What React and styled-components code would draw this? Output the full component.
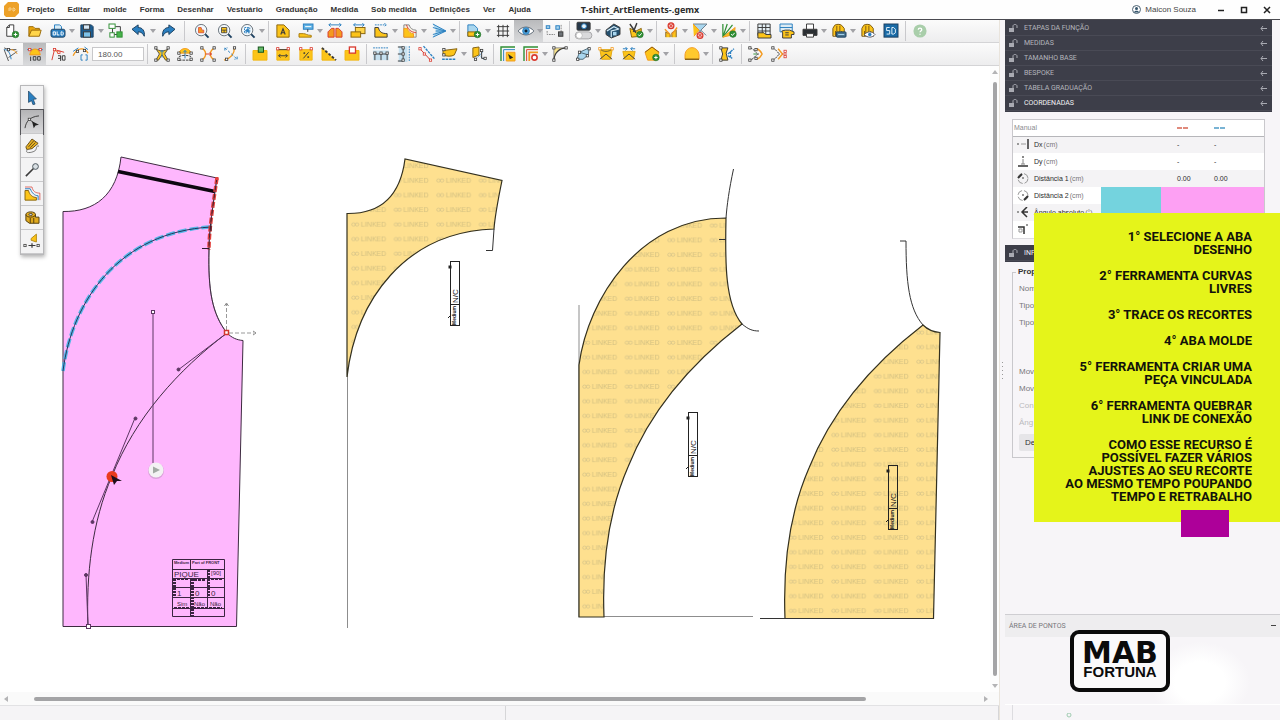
import React from "react";
import styled, { createGlobalStyle } from "styled-components";

const sans = '"Liberation Sans", Arial, sans-serif';
const caps = 'Roboto, "Liberation Sans", sans-serif';

const Global = createGlobalStyle`
  *, *::before, *::after { box-sizing: border-box; }
  body { margin: 0; background: #f7f5f8; font-family: ${sans}; color: #2c2c2c; }
  button, input { font-family: inherit; }
`;

/* ---------- page frame ---------- */
const Page = styled.div`
  position: relative;
  display: flex;
  flex-direction: column;
  min-height: 100vh;
  overflow: hidden;
`;
const TitleBar = styled.header`
  display: grid;
  grid-template-columns: 1fr auto 1fr;
  align-items: center;
  height: 20px;
  background: #fefefe;
  border-bottom: 1px solid #4a4a50;
`;
const MenuBar = styled.nav`
  display: flex;
  align-items: center;
  gap: 13px;
  padding-left: 4px;
`;
const AppMark = styled.svg`
  width: 15px;
  height: 15px;
  margin-right: -5px;
`;
const MenuItem = styled.button`
  padding: 0;
  border: 0;
  background: none;
  font-size: 8px;
  font-weight: 700;
  line-height: 12px;
  color: #333;
  white-space: nowrap;
`;
const FileName = styled.h1`
  margin: 0;
  font-family: "Noto Sans", ${sans};
  font-size: 9px;
  font-weight: 700;
  line-height: 12px;
`;
const WindowSide = styled.div`
  display: flex;
  justify-content: flex-end;
  align-items: center;
  gap: 15px;
  padding-right: 9px;
`;
const User = styled.span`
  display: flex;
  align-items: center;
  gap: 4px;
  margin-right: 6px;
  font-size: 8px;
  color: #444;
`;
const WindowButton = styled.button`
  display: flex;
  padding: 0;
  border: 0;
  background: none;
`;
const Main = styled.main`
  display: flex;
  flex: 1;
`;
const Work = styled.section`
  display: flex;
  flex-direction: column;
  flex: 1;
  min-width: 0;
  border-right: 1px solid #e9e4dc;
`;

/* ---------- toolbars ---------- */
const Toolbar = styled.div`
  display: flex;
  align-items: center;
  height: 23px;
  background: linear-gradient(#fbfbfb, #ededee);
  border-bottom: 1px solid #d4d4d6;
`;
const ToolButton = styled.button`
  display: flex;
  align-items: center;
  justify-content: center;
  flex: none;
  width: 23px;
  height: 22px;
  padding: 0;
  border: 0;
  background: ${(p) => (p.$active ? "linear-gradient(#b9babc, #d9dadc)" : "none")};
`;
const CaretButton = styled.button`
  display: flex;
  align-items: center;
  justify-content: center;
  flex: none;
  width: 6px;
  height: 22px;
  padding: 0;
  border: 0;
  background: ${(p) => (p.$active ? "linear-gradient(#b9babc, #d9dadc)" : "none")};
  &::after {
    content: "";
    border: 3px solid transparent;
    border-top: 4px solid #a2a2a6;
    border-bottom: 0;
  }
`;
const Separator = styled.span`
  flex: none;
  width: ${(p) => (p.$wide ? 11 : 6)}px;
  height: 20px;
  background: linear-gradient(#c9c9cc, #c9c9cc) center / 1px 100% no-repeat;
`;
const AngleInput = styled.input`
  flex: none;
  width: 52px;
  height: 14px;
  padding: 0 5px;
  border: 1px solid #c8c8ca;
  background: #fff;
  font-size: 8px;
  color: #555;
`;
const Glyph = styled.svg`
  width: 14px;
  height: 14px;
  overflow: visible;
  fill: none;
  stroke: #3b3b3b;
  stroke-width: 1.1;
`;

/* ---------- canvas ---------- */
const CanvasRow = styled.div`
  position: relative;
  display: flex;
  flex: 1;
  background: #fff;
`;
const Drawing = styled.svg`
  flex: 1;
  min-width: 0;
  height: 626px;
`;
const VScroll = styled.div`
  display: flex;
  flex-direction: column;
  align-items: center;
  justify-content: space-between;
  width: 9px;
  padding: 4px 0;
  background: #fdfdfd;
`;
const VThumb = styled.div`
  flex: 1;
  width: 4px;
  margin: 8px 0;
  border-radius: 2px;
  background: #a4a4a6;
`;
const HScroll = styled.div`
  display: flex;
  align-items: center;
  justify-content: space-between;
  height: 13px;
  padding: 0 11px 0 4px;
  background: #fafafa;
`;
const HTrack = styled.div`
  flex: 1;
  margin: 0 26px;
`;
const HThumb = styled.div`
  width: 90%;
  height: 4px;
  border-radius: 2px;
  background: #a4a4a6;
`;
const Arrow = styled.span`
  width: 0;
  height: 0;
  border: 3px solid transparent;
  border-${(p) => p.$side}: 4px solid #b4b4b6;
  border-${(p) => p.$flat}: 0;
`;
const StatusBar = styled.footer`
  display: grid;
  grid-template-columns: 1fr 1fr;
  height: 15px;
  padding-left: 12px;
  background: #f5f4f6;
  border-top: 1px solid #e2e2e4;
`;
const StatusCell = styled.span`
  border-right: 1px solid #d6d6d8;
`;
const Palette = styled.div`
  position: absolute;
  left: 20px;
  top: 19px;
  display: flex;
  flex-direction: column;
  border: 1px solid #b8b8ba;
  box-shadow: 1px 2px 4px rgba(0, 0, 0, 0.3);
`;
const PaletteButton = styled.button`
  display: flex;
  align-items: center;
  justify-content: center;
  width: 22px;
  height: 24px;
  padding: 0;
  border: 0;
  border-bottom: 1px solid #c9c9cb;
  background: ${(p) => (p.$active ? "linear-gradient(#b4b4b6, #d8d8da)" : "#f3f3f4")};
  outline: ${(p) => (p.$active ? "1px solid #55555a" : "none")};
`;

/* ---------- side panel ---------- */
const Side = styled.aside`
  display: flex;
  flex: none;
  width: 280px;
  background: #f7f5f8;
`;
const Splitter = styled.div`
  display: flex;
  flex-direction: column;
  justify-content: center;
  align-items: center;
  gap: 3px;
  width: 5px;
`;
const Dot = styled.span`
  width: 1px;
  height: 1px;
  background: #999;
`;
const SideBody = styled.div`
  display: flex;
  flex-direction: column;
  flex: 1;
`;
const Sections = styled.div`
  margin-right: 8px;
  padding: 1px 0;
  background: #3d3e49;
`;
const SectionButton = styled.button`
  display: flex;
  align-items: center;
  gap: 6px;
  width: 100%;
  height: 15px;
  padding: 0 4px;
  border: 0;
  border-bottom: 1px solid #494a55;
  background: #3d3e49;
  font-size: 7px;
  font-family: ${caps};
  text-align: left;
  color: ${(p) => (p.$current ? "#f2f2f4" : "#b4b5bc")};
`;
const SectionName = styled.span`
  flex: 1;
`;
const SmallGlyph = styled.svg`
  flex: none;
  width: 9px;
  height: 8px;
  fill: none;
  stroke: #a9aab2;
  stroke-width: 1;
`;
const TableFrame = styled.div`
  position: relative;
  margin: 7px 15px 6px 7px;
  border: 1px solid #c9c8cc;
  border-bottom-color: #dddce0;
`;
const CoordTable = styled.table`
  width: 100%;
  border-collapse: collapse;
  table-layout: fixed;
  font-size: 7px;
  line-height: 8px;
  background: #fff;
  th, td { padding: 0 0 0 4px; text-align: left; font-weight: 400; }
`;
const HeadRow = styled.tr`
  height: 16px;
  color: #8b8b8f;
  th { border-bottom: 1px solid #b6b6ba; }
  th:first-child { padding-left: 1px; }
`;
const CoordRow = styled.tr`
  height: 17px;
  background: ${(p) => (p.$shade ? "#f4f3f5" : "#fff")};
`;
const Label = styled.span`
  display: flex;
  align-items: center;
  gap: 5px;
  white-space: nowrap;
`;
const Unit = styled.small`
  margin-left: -4px;
  font-size: 7px;
  color: #777;
`;
const Mark = styled.span`
  display: inline-block;
  width: 11px;
  height: 2px;
  background: linear-gradient(90deg, ${(p) => p.$tone} 5px, transparent 5px 6px, ${(p) => p.$tone} 6px);
  vertical-align: middle;
`;
const Swatches = styled.div`
  position: absolute;
  right: 0;
  top: 67px;
  display: flex;
  width: 163px;
  height: 30px;
`;
const Swatch = styled.div`
  flex: ${(p) => p.$grow};
  background: ${(p) => p.$tone};
`;
const Props = styled.fieldset`
  margin: 4px 15px 0 7px;
  min-width: 0;
  height: 192px;
  padding: 2px 6px 0;
  border: 1px solid #c9c8cc;
  font-size: 8px;
  line-height: 17px;
  color: #77777b;
`;
const Legend = styled.legend`
  margin-left: -3px;
  padding: 0 2px;
  font-weight: 700;
  line-height: 12px;
  color: #333;
`;
const PropList = styled.ul`
  margin: 0 0 32px;
  padding: 0;
  list-style: none;
  &:last-of-type { margin-bottom: 3px; }
`;
const PropItem = styled.li`
  height: 17px;
  color: ${(p) => (p.$faint ? "#b9b9bd" : "#77777b")};
`;
const PropButton = styled.button`
  width: 90px;
  height: 17px;
  border: 0;
  border-radius: 2px;
  background: #e6e5e8;
  font-size: 8px;
  text-align: left;
  color: #333;
`;
const PointsHead = styled.div`
  display: flex;
  align-items: center;
  justify-content: space-between;
  height: 23px;
  margin-top: auto;
  padding: 0 4px;
  border-top: 1px solid #cfced2;
  background: #eeedef;
  font-family: ${caps};
  font-size: 7px;
  color: #77777b;
`;
const PointsBody = styled.div`
  position: relative;
  height: 68px;
  border-bottom: 1px solid #fff;
  background: radial-gradient(ellipse 50px 40px at 195px 45px, #fff 50%, #f7f5f8 100%);
`;
const PointsFoot = styled.div`
  height: 15px;
  margin-left: 7px;
  border-left: 1px solid #dddce0;
`;
const Logo = styled.div`
  position: absolute;
  left: 65px;
  top: -7px;
  width: 100px;
  height: 62px;
  padding-top: 8px;
  border: 4px solid #0b0b0b;
  border-radius: 9px;
  background: #fbfafb;
  text-align: center;
  font-weight: 700;
  color: #0b0b0b;
`;
const LogoTop = styled.div`
  font-family: "DejaVu Sans", ${sans};
  font-size: 30px;
  line-height: 22px;
`;
const LogoBottom = styled.div`
  font-size: 15px;
  line-height: 16px;
`;

/* ---------- video note over the window ---------- */
const Note = styled.div`
  position: absolute;
  right: 0;
  top: 213px;
  width: 246px;
  height: 309px;
  padding: 17px 28px 0 0;
  background: #e5f41a;
  font-family: ${caps};
  font-size: 13px;
  font-weight: 700;
  line-height: 13px;
  text-align: right;
  color: #12120a;
  white-space: pre;
`;
const NoteItem = styled.p`
  margin: 0 0 13px;
`;
const NoteTag = styled.div`
  position: absolute;
  right: 51px;
  bottom: -15px;
  width: 48px;
  height: 27px;
  background: #ad0099;
`;

/* ---------- icon drawings on a 16 x 16 grid ---------- */
const Y = "#fcc419", O = "#f39a1f", B = "#2a7fc0", N = "#1b3f5f", G = "#2f8f34", R = "#d93a2f", L = "#a9d6ee";

const Plus = ({ x = 12, y = 12 }) => (
  <g>
    <circle cx={x} cy={y} r="3.8" fill={G} stroke="#1d6b22" strokeWidth=".6" />
    <path d={`M${x - 2},${y}h4M${x},${y - 2}v4`} stroke="#fff" />
  </g>
);
const Check = ({ x = 12, y = 12 }) => (
  <g>
    <circle cx={x} cy={y} r="3.8" fill={G} stroke="#1d6b22" strokeWidth=".6" />
    <path d={`M${x - 2},${y}l1.4,1.6l2.6,-3`} stroke="#fff" />
  </g>
);
const Ban = ({ x, y }) => (
  <g>
    <circle cx={x} cy={y} r="3.3" fill="#f7b9b3" stroke={R} strokeWidth="1.4" />
    <path d={`M${x - 2},${y - 2}l4,4M${x + 2},${y - 2}l-4,4`} stroke={R} />
  </g>
);
const Lens = ({ children }) => (
  <g>
    <path d="M11,11l4.5,4.5" stroke={N} strokeWidth="2.2" />
    <circle cx="7" cy="7" r="6.5" fill="#f3f8fb" stroke="#66707a" />
    {children}
  </g>
);
const Nodes = ({ at, tone = "#3b3b3b" }) => at.map(([x, y]) => (
  <rect key={`${x} ${y}`} x={x - 1.3} y={y - 1.3} width="2.6" height="2.6" fill="#fff" stroke={tone} strokeWidth=".9" />
));
const Shirt = () => <path d="M1,14V5L3,1.500C5,0 9,0 11,1.500L14,5V14H11V8M4,14V8M1,14H14M5.500,2V13M9,2V13" fill={Y} stroke="#7b5a10" />;

const icons = {
  fresh: <><path d="M2,14V4L5,1H10V14Z" fill="#fff" /><path d="M2,4H5V1" /><Plus /></>,
  open: <><path d="M1,14V3H6L8,5H13V7" fill="#e9a50c" stroke="#9a6b0a" /><path d="M1,14L4,7H15L13,14Z" fill="#ffd54a" stroke="#9a6b0a" /></>,
  old: <><path d="M4,6V1H10L12,3V6" fill="#d7ecf8" stroke={B} /><rect x="0" y="6" width="16" height="9" rx="2" fill={B} stroke={N} /><path d="M2.500,9h2.500v3.500h-2.500zM7,8.500v4h2.500M11.500,9h1.500l1,1v2l-1,.6h-1.500z" stroke="#fff" /></>,
  save: <><path d="M1,1H13L15,3V15H1Z" fill="#1d5d91" stroke={N} /><rect x="4" y="1" width="7" height="5" fill="#d6e8f5" /><rect x="4" y="9" width="8" height="6" fill="#7cc2ea" /></>,
  tree: <><path d="M4,5V12H10M7,3H13V9" /><rect x="0" y="0" width="7" height="5" fill="#fff" stroke={G} /><rect x="9" y="9" width="6" height="6" fill="#47b34b" stroke={G} /><rect x="1" y="10" width="5" height="5" fill="#fff" stroke={G} /></>,
  undo: <path d="M0,6L7,1V4C12,4 15,8 14,14C12,10 10,9 7,9V12Z" fill={B} stroke={N} />,
  redo: <path d="M16,6L9,1V4C4,4 1,8 2,14C4,10 6,9 9,9V12Z" fill={B} stroke={N} />,
  zoomPiece: <Lens><path d="M4,10V4H7L8,7H10V10Z" fill={O} stroke={R} strokeWidth=".8" /></Lens>,
  zoomAll: <Lens><path d="M4,4H10V10H4ZM4,7H10M7,7V10" fill={Y} strokeWidth=".9" /></Lens>,
  zoomBox: <Lens><path d="M4,4H10V10H4Z" stroke={B} strokeDasharray="2 1" /><path d="M5,8L8,5L9,9Z" fill={B} stroke={B} /></Lens>,
  letter: <><path d="M1,15V1H9L15,7V15Z" fill={Y} stroke="#8a650d" /><path d="M5.500,12L8,5.500L10.500,12M6.500,10H9.500" strokeWidth="1.300" /></>,
  note: <><rect x="5" y="0" width="11" height="6" fill="#5fb2e4" stroke={B} /><path d="M7,3h7" stroke="#fff" /><path d="M10,6v3" /><path d="M0,15V11H5C8,11 9,13 14,13V15Z" fill={Y} stroke="#a87c10" /></>,
  mirror: <><path d="M1,1H15M3,-1L1,1L3,3M13,-1L15,1L13,3" stroke={B} /><path d="M0,15V9L4,5H7V15Z" fill={O} stroke={R} /><path d="M16,15V9L12,5H9V15Z" fill={O} stroke={R} /></>,
  stack: <><path d="M3,1H15M5,-1L3,1L5,3M13,-1L15,1L13,3" stroke={B} /><rect x="5" y="4" width="11" height="7" fill="#ffd54a" stroke="#876410" /><rect x="0" y="9" width="11" height="6" fill={Y} stroke="#876410" /></>,
  corner: <><path d="M1,1H14M12,-1L14,1L12,3" stroke={B} strokeDasharray="2 1" /><path d="M1,15V4H5C6,9 9,11 15,11V15Z" fill={Y} /></>,
  offset: <><path d="M1,1H7C8,5 11,7 15,7V15H1Z" fill="#f6f1e4" stroke="#888" /><path d="M1,5H5C6,9 9,11 12,11V15H1Z" fill={Y} stroke={O} /><path d="M4,1C6,7 9,9 15,10" stroke={R} /></>,
  fan: <><path d="M1,0L16,8L1,15L5,8Z" fill={L} stroke="none" /><path d="M1,0L16,8L1,15M1,4L15,8L1,12M4,8H15" stroke={B} /></>,
  addPiece: <><path d="M1,14V1H8L12,5V14Z" fill={L} stroke={B} /><path d="M1,14V9H10V14Z" fill={Y} stroke="#876410" /><Plus /></>,
  grid: <path d="M3,1V15M8,1V15M13,1V15M1,3H15M1,8H15M1,13H15" strokeWidth="1.100" />,
  eye: <><path d="M-1,8C4,2 12,2 17,8C12,14 4,14 -1,8Z" fill="#fff" stroke="#55626e" /><circle cx="8" cy="8" r="3.800" fill="#4fa3dc" stroke={B} /><circle cx="8" cy="8" r="1.700" fill="#123" stroke="none" /></>,
  link: <><rect x="-2" y="2" width="4" height="3" fill={L} stroke={B} /><rect x="9" y="2" width="4" height="4" fill={L} stroke={B} /><path d="M-1,8V12H8M15,1V9" strokeDasharray="2 1" stroke="#888" /><rect x="12" y="9" width="5" height="5" fill="#6e7378" /></>,
  camera: <><rect x="0" y="-2" width="15" height="9" rx="1" fill="#26384a" /><circle cx="8" cy="2.500" r="2.800" fill="#e8f2f8" stroke={B} /><rect x="-2" y="9" width="19" height="8" rx="4" fill="#d9d9db" stroke="#a5a5a8" /><circle cx="2.500" cy="13" r="3.500" fill="#fff" stroke="#aaa" strokeWidth=".7" /></>,
  house: <><path d="M0,7L9,0L16,4V12L6,16L0,12Z" fill="#25516f" /><path d="M1,8L9,3L15,6M6,15V8L14,6" stroke="#d4eaf6" strokeWidth="1.400" /><rect x="8" y="9" width="4" height="4" fill={L} stroke="none" /></>,
  cut: <><path d="M3,15L1,5L8,8L14,5V14Z" fill={Y} stroke="#876410" /><path d="M1,0L8,10M9,-1L5,9" strokeWidth="1.600" /><Check x={12.5} y={12} /></>,
  wye: <><path d="M2,15V9L7,12V15M9,15V10L14,7V15" fill={Y} stroke="#8a6a2a" /><path d="M1,6L7,12M15,4L9,12" stroke={O} strokeWidth="1.500" /><Ban x={8} y={2} /></>,
  hourglass: <><path d="M0,0H16L9,7V9H7V7Z" fill={L} stroke="#6c7f8c" /><path d="M0,0L7,7L1,14" fill={Y} stroke={O} /><path d="M16,0L9,7L15,13" stroke="#6c7f8c" /><Ban x={8} y={13} /></>,
  spread: <><path d="M1,15V0M1,15L6,0M1,15L12,1" stroke={G} strokeWidth="1.400" /><path d="M1,15L15,4L14,12Z" fill={Y} stroke={O} /><Check x={12.5} y={11.5} /></>,
  sheet: <><path d="M1,0H15V13H1ZM1,4H15M1,8H15M6,0V13M10,0V13" fill="#e5f0f5" /><path d="M1,16V10H8L10,12H16V16Z" fill={Y} /></>,
  order: <><path d="M0,0H14V9H0ZM0,4H14" fill="#dcebf3" stroke={B} /><path d="M3,16V10L2,8L6,7L11,7L16,9V12H13V16Z" fill={Y} /><path d="M6,10h4M6,12.500h4" /></>,
  print: <><path d="M4,6V0H12V6" fill="#fff" /><path d="M0,6H16V13H0Z" fill="#2b2f33" /><path d="M4,11H12V15H4Z" fill="#fff" /></>,
  shirtPrint: <><Shirt /><rect x="5" y="9" width="11" height="6" rx="1" fill="#48728c" stroke={N} /><path d="M7,12h7" stroke={L} /></>,
  shirtEye: <><Shirt /><path d="M4,12C7,8 13,8 16,12C13,16 7,16 4,12Z" fill="#fff" stroke="#556" /><circle cx="10" cy="12" r="2" fill={B} stroke="none" /></>,
  cad: <><rect x="0" y="0" width="16" height="15" fill="#1a6ba6" stroke={N} /><path d="M6.500,4H3V7.500H6.500V11.500H3M9,4H11L13,6V10L11,11.500H9Z" stroke="#e6f4fc" /></>,
  help: <><circle cx="8" cy="8" r="7.500" fill="#a9ceaa" stroke="none" /><path d="M6,6.500C6,4 10,4 10,6.500C10,8 8,8 8,9.500M8,11v1.400" stroke="#fff" strokeWidth="1.500" /></>,

  rays: <><path d="M4,16L-1,3M4,12L14,5M-1,1L4,3L13,3" stroke="#555" /><path d="M-1,3C3,3 6,6 7,14" stroke={B} /><path d="M7,3C10,3 12,5 14,8" stroke={O} /><Nodes at={[[4, 3]]} /></>,
  arc180: <><path d="M-1,3H17" stroke={B} /><path d="M2,9C3,0 13,0 14,9Z" fill={Y} stroke={O} /><path d="M3,11v5M6,11h3v4h-3zM11,11h3v4h-3z" /><Nodes at={[[2, 3], [14, 3]]} tone={R} /></>,
  arc90: <><path d="M1,15L4,3L15,6" stroke={R} /><path d="M4,3L9,8" stroke={O} /><path d="M8,10h3v3h-3M11,10v6M13,10h3v5h-3z" /><Nodes at={[[4, 3], [9, 6]]} tone={R} /></>,
  arcLock: <><path d="M-1,10C4,0 12,0 16,7" stroke={O} strokeWidth="1.500" /><path d="M-1,5L5,1M12,0L16,3" stroke={B} /><path d="M10,9h-2v6h2M13,9h2v6h-2" stroke={B} /><Nodes at={[[4, 5], [12, 4]]} /></>,
  curveUp: <><path d="M1,2C4,5 12,5 15,2L11,8L15,15H12L8,9L4,15H1L5,8Z" fill={Y} strokeWidth=".9" /><path d="M8,12V4M6,6L8,4L10,6" stroke={B} /><Nodes at={[[1, 1], [15, 1], [1, 15], [15, 15]]} /></>,
  curveCap: <><path d="M1,7C3,0 13,0 15,7Z" fill={Y} stroke={O} /><path d="M8,13V4M6,6L8,4L10,6" stroke={B} /><path d="M1,11C5,9 11,9 15,11M1,15H15" strokeDasharray="3 1" /><Nodes at={[[1, 7], [15, 7], [1, 14], [15, 14]]} /></>,
  curveIn: <><path d="M0,1C7,4 7,12 0,15M16,1C9,4 9,12 16,15" stroke={O} strokeWidth="1.600" /><path d="M5,8H12M10,6L12,8L10,10" stroke={R} /><Nodes at={[[1, 1], [1, 15], [15, 1], [15, 15]]} /></>,
  curveOut: <><path d="M12,0C12,8 8,13 0,15" stroke={O} strokeWidth="1.500" /><path d="M1,1L15,14M1,4V1H4M15,11V14H12" stroke={B} strokeDasharray="3 2" /><Nodes at={[[12, 1], [3, 14]]} /></>,
  blockGreen: <><path d="M0,15V4H16V15Z" fill={Y} stroke="#f0b616" /><rect x="6" y="0" width="6" height="6" fill="#65ba68" stroke="#14511a" /></>,
  blockSize: <><path d="M1,15V3H15V15Z" fill={Y} stroke="#f0b616" /><path d="M1,3H15M3,10H13M5,8L3,10L5,12M11,8L13,10L11,12" /><Nodes at={[[2, 2], [14, 2]]} tone={R} /></>,
  blockPct: <><path d="M1,15V3H15V15Z" fill={Y} stroke="#f0b616" /><path d="M5,13L11,6M5.500,6.500h1v1h-1zM10,11h1v1h-1z" /><Nodes at={[[2, 2], [14, 2]]} tone={R} /></>,
  stepNodes: <><path d="M0,1V15H15Z" fill={Y} stroke="#f0b616" /><path d="M0,1L16,15" strokeDasharray="3 2" strokeWidth="2.200" /></>,
  blockRed: <><path d="M0,15V4H16V15Z" fill={Y} stroke="#f0b616" /><rect x="5" y="0" width="7" height="7" fill="#fff" stroke={R} strokeWidth="1.500" /></>,
  alignH: <><path d="M-1,1H17" stroke={B} strokeDasharray="2 1" /><rect x="-1" y="4" width="18" height="11" fill={L} stroke="none" opacity=".6" /><path d="M1,15V8M8,8V15M15,8V15M1,8H15" /><Nodes at={[[1, 7], [8, 7], [15, 7]]} /></>,
  alignV: <><rect x="2" y="-1" width="10" height="18" fill={L} stroke="none" opacity=".6" /><path d="M14,-1V17" stroke={B} strokeDasharray="2 1" /><path d="M1,0H7V16H1M7,8H1" /><Nodes at={[[7, 1], [7, 8], [7, 15]]} /></>,
  alignD: <><path d="M4,-1L17,14" stroke={B} strokeDasharray="3 1" strokeWidth="1.500" /><path d="M0,2L12,15" stroke={R} /><Nodes at={[[0, 2], [5, 8], [12, 15]]} tone={R} /></>,
  cup: <><path d="M0,4L16,2L13,9C10,11 4,11 0,9Z" fill={Y} stroke="#826012" /><path d="M-1,14H14" stroke={B} strokeWidth="1.500" strokeDasharray="3 1" /><Nodes at={[[1, 3], [1, 9]]} /></>,
  unfold: <><path d="M1,12V1L8,0V9Z" fill={Y} stroke="#826012" /><path d="M8,9L15,15M4,14L12,6" stroke={B} strokeDasharray="2 1" /><path d="M11,3V13H16" /><Nodes at={[[11, 4], [15, 13], [4, 14]]} /></>,
  layers: <><path d="M0,16V0H16" stroke={G} strokeWidth="1.600" /><path d="M3,16V3H16" stroke={B} /><path d="M6,16V6H16V16Z" fill={Y} stroke={O} /><path d="M8,8L14,12L10,14Z" fill="#222" stroke="none" /></>,
  layersOff: <><path d="M0,16V0H16" stroke={G} strokeWidth="1.600" /><path d="M3,16V3H16" stroke={R} /><path d="M6,16V6H16" stroke={O} strokeWidth="2" /><circle cx="12" cy="12" r="3" fill="#fff" stroke={R} strokeWidth="1.800" /></>,
  round: <><path d="M1,16C1,7 7,1 16,1H1Z" fill="#f9e38a" stroke="none" /><path d="M1,16V1H16" stroke="#888" /><path d="M1,16C1,7 7,1 16,1" strokeWidth="1.300" /><Nodes at={[[1, 1], [1, 15], [15, 1]]} /></>,
  mesh: <><path d="M1,14L4,6L15,1L14,9L8,14Z" fill={L} stroke="#4b6878" /><path d="M4,6L14,9" stroke="#4b6878" /><Nodes at={[[4, 6], [15, 2], [2, 14], [13, 10]]} /></>,
  envelope: <><path d="M1,3H15L13,14H3Z" fill={Y} stroke="#e0a512" /><path d="M1,14L8,8L15,14" /><path d="M1,2C4,6 12,6 15,2" strokeWidth=".8" /><Nodes at={[[1, 2], [15, 2]]} tone={O} /></>,
  envelopeMove: <><path d="M1,5H15L13,14H3Z" fill={Y} stroke="#e0a512" /><path d="M1,14L8,8L15,14" /><path d="M1,2H6M10,2H15M4,0L6,2L4,4M12,0L10,2L12,4" stroke={B} /></>,
  addHome: <><path d="M0,6L8,0L16,6L13,15H3Z" fill={Y} stroke={O} /><path d="M0,6L8,0L16,6" stroke="#8e5d0b" /><Plus x={12.5} y={12} /></>,
  bell: <><path d="M0,14V9C1,-2 15,-2 16,9V14Z" fill="#ffc92e" stroke={O} /><path d="M0,14H16" stroke="#7c5a14" strokeWidth="1.500" /></>,
  flags: <><path d="M1,1H9L7,7L9,15H1L3,8Z" fill={Y} /><path d="M9,8L16,2M9,10L14,13M12,5V13" stroke={B} strokeWidth="1.500" strokeDasharray="3 1" /><Nodes at={[[1, 1], [1, 15]]} /></>,
  joinOne: <><path d="M1,1C6,2 7,7 11,8C7,9 6,14 1,15" strokeDasharray="3 1" /><path d="M9,2C12,3 14,6 15,8C14,10 12,13 9,14" stroke={O} strokeWidth="1.600" /><path d="M5,8h4" stroke={G} /><Nodes at={[[1, 1], [1, 15], [8, 3], [8, 13]]} /></>,
  joinTwo: <><path d="M0,1C5,2 6,7 9,8C6,9 5,14 0,15" strokeDasharray="3 1" /><path d="M7,2L12,8L7,14" stroke={O} strokeWidth="1.600" /><path d="M12,8H17" stroke={R} /><Nodes at={[[1, 1], [1, 15]]} /><Nodes at={[[15, 5], [15, 11]]} tone={R} /></>,

  pointer: <path d="M4,0L13,9L9.500,9.500L11.500,15L9,15.500L7.500,11L4,13Z" fill={B} stroke={N} strokeWidth=".8" />,
  editCurve: <><path d="M0,15C1,8 5,2 16,1" /><path d="M5,5L10,9" /><Nodes at={[[5, 5]]} /><path d="M8,7L16,11L12,12L10,15Z" fill="#222" stroke="none" /></>,
  pencil: <><path d="M1,9L8,0L15,5L8,11L2,12Z" fill="#e6b022" stroke="#69501a" /><path d="M4,9L10,2M6,10L12,4" stroke="#69501a" /><path d="M3,12C-2,17 9,16 12,13C14,10 12,8 16,8" stroke="#777" /></>,
  pin: <><path d="M1,15L10,6" strokeWidth="1.800" /><circle cx="12" cy="4" r="3.300" fill="#d8dfe3" stroke="#4a545c" /></>,
  grading: <><path d="M0,15V4H4C5,9 9,12 13,12V15Z" fill={Y} stroke="#876410" /><path d="M0,2H6C8,7 11,10 15,10V15" stroke={B} /><path d="M0,0H8C9,5 12,7 17,7V15" stroke={R} strokeWidth=".8" /></>,
  tape: <><path d="M1,4C1,0 12,0 12,4V7H16V14H5L1,11Z" fill="#dfa91f" stroke="#53400f" /><path d="M1,4C1,8 12,8 12,4M6,8v6M10,8v6" stroke="#53400f" /><ellipse cx="6.500" cy="4" rx="2" ry="1" fill="#fff" /></>,
  snap: <><path d="M7,4L13,-1V8L7,6Z" fill={Y} stroke="#b48a17" /><path d="M4,12H12M8,9.500V14.500" strokeWidth="1.400" /><Nodes at={[[0, 12], [15, 12]]} /></>,
};
const Icon = ({ name }) => <Glyph viewBox="0 0 16 16" aria-hidden="true">{icons[name]}</Glyph>;

/* "|" is a separator, "||" a wide one; a trailing ",v" marks a drop-down, a leading "*" the active tool */
const mainTools = "fresh open old,v save,v tree undo,v redo || zoomPiece zoomAll zoomBox,v | letter note,v mirror stack corner,v offset,v fan,v | addPiece,v grid *eye,v link | camera,v house cut,v | wye,v hourglass,v spread,v | sheet order print,v shirtPrint,v shirtEye cad | help".split(" ");
const curveStart = "rays *arc180 arc90 arcLock".split(" ");
const curveRest = "| curveUp curveCap curveIn curveOut | blockGreen blockSize blockPct stepNodes blockRed | alignH alignV alignD cup,v unfold | layers layersOff,v round mesh envelope envelopeMove addHome,v || bell,v | flags | joinOne joinTwo".split(" ");

const Tools = ({ list }) => list.map((item, i) => {
  if (item[0] === "|") return <Separator key={i} $wide={item === "||"} />;
  const active = item[0] === "*";
  const [name, drop] = item.replace("*", "").split(",");
  return (
    <React.Fragment key={i}>
      <ToolButton $active={active} aria-label={name}><Icon name={name} /></ToolButton>
      {drop && <CaretButton $active={active} aria-label={`${name} menu`} />}
    </React.Fragment>
  );
});

/* ---------- pattern pieces ---------- */
const LinkedPattern = ({ id, x, y }) => (
  <pattern id={id} x={x} y={y} width="42.5" height="14.65" patternUnits="userSpaceOnUse">
    <g fill="none" stroke="#d5c388" strokeWidth=".8">
      <ellipse cx="2.500" cy="7.500" rx="1.800" ry="1.600" />
      <ellipse cx="6" cy="7.500" rx="1.800" ry="1.600" />
    </g>
    <text x="10" y="10" fontSize="7" fontFamily={sans} fill="#d0be80">LINKED</text>
  </pattern>
);
const Piece = ({ id, d }) => (
  <g>
    <path d={d} fill="#fee08f" />
    <path d={d} fill={`url(#${id})`} stroke="#33301f" strokeWidth="1.2" />
  </g>
);
const Tag = ({ x, y }) => (
  <g transform={`translate(${x},${y})`} stroke="#222" fill="none">
    <rect x="0.500" y="0.500" width="9" height="64" />
    <path d="M0,43.500H9" />
    <rect x="-1" y="5" width="2" height="2" fill="#222" />
    <path d="M-2,57l3,-3" />
    <text transform="translate(8,42) rotate(-90)" fontSize="8" fontFamily={sans} fill="#222" stroke="none">N/C</text>
    <text transform="translate(6,64) rotate(-90)" fontSize="5" fontWeight="700" fontFamily={sans} fill="#222" stroke="none">Medium</text>
  </g>
);
const PieceLabel = () => (
  <g stroke="#3a2440" fill="none" fontFamily={sans}>
    <path d="M172.500,559.500H224.500V616.500H172.500ZM172.500,569.500H224.500M172.500,578.500H224.500M172.500,587.500H224.500M172.500,597.500H224.500M172.500,608.500H224.500M190.500,559.500V569.500M207.500,569.500V608.500M190.500,578.500V616.500" />
    <path d="M174.500,579V597M192.500,579V616M208.500,570V597" strokeWidth="3" strokeDasharray="2 1" />
    <path d="M174,608H189M193,608H222M177,579H188M194,580H205M211,579H222" strokeWidth="2" strokeDasharray="3 1" />
    <g fill="#3a2440" stroke="none">
      <text x="174" y="564" fontSize="4" fontWeight="700">Medium</text>
      <text x="192" y="564" fontSize="4" fontWeight="700">Part of FRONT</text>
      <text x="174" y="577" fontSize="8">PIQUE</text>
      <text x="211" y="575" fontSize="6">[90]</text>
      <text x="177" y="596" fontSize="8">1</text>
      <text x="195" y="596" fontSize="8">0</text>
      <text x="211" y="596" fontSize="8">0</text>
      <text x="177" y="606" fontSize="6">Sim</text>
      <text x="194" y="606" fontSize="6">Não</text>
      <text x="210" y="606" fontSize="6">Não</text>
    </g>
  </g>
);

const armhole = "M217,178C213,205 209,230 209,250C208,290 212,314 227,333";
const blueArc = "M63,371C72,300 120,232 211,227";

const Pieces = () => (
  <Drawing role="img" aria-label="Moldes">
    <defs>
      <LinkedPattern id="linkA" x={351} y={173} />
      <LinkedPattern id="linkB" x={582} y={218} />
      <LinkedPattern id="linkC" x={831} y={325} />
    </defs>
    <g transform="translate(0,-66)" fill="none" strokeWidth="1">
      <path d="M63,211.500C95,212 117,195 121,157L217,178C213,205 209,230 209,250C208,290 212,314 227,333C232,338 237,340 243,340.500L236.500,626.500H63Z" fill="#feb7fd" stroke="#3d2b40" />
      <path d="M118,171.500L215,191.500" stroke="#0d0710" strokeWidth="3.500" />
      <path d={blueArc} stroke="#55b5e6" strokeWidth="3.500" strokeDasharray="9 3" />
      <path d={blueArc} stroke="#23345c" />
      <path d="M217,178C213,205 209,230 209,250" stroke="#e2403c" strokeWidth="3.500" strokeDasharray="6 2" />
      <path d="M217,178C213,205 209,230 209,250" stroke="#571d24" strokeDasharray="4 4" />
      <path d={armhole} stroke="#3d2b40" strokeWidth=".6" />
      <path d="M202,248.500H209M211,224V231" stroke="#2c1a2e" />
      <rect x="215.500" y="177" width="3" height="3" fill="#e2403c" />
      <g stroke="#5d3663">
        <path d="M227,333C178,370 135,418 112,476C92,522 86,575 88,626" stroke="#3d2b40" />
        <path d="M227,333L178,370M135,418L92,522M86,575L88,626" />
        <path d="M153,314V463" />
        <g fill="#5d3663">
          <circle cx="178.500" cy="369.500" r="1.500" /><circle cx="135.500" cy="418.500" r="1.500" />
          <circle cx="92.500" cy="522" r="1.500" /><circle cx="86" cy="575" r="1.500" />
        </g>
        <rect x="151.500" y="310.500" width="3" height="3" fill="#fff" />
        <rect x="86.500" y="624.500" width="4" height="4" fill="#fff" />
      </g>
      <path d="M226.500,330V304M229,333H254" stroke="#999" strokeDasharray="4 2" />
      <path d="M224.500,306L226.500,303L228.500,306M253,331L256,333L253,335" stroke="#888" />
      <rect x="224.500" y="330.500" width="4" height="4" fill="#fff" stroke="#d1372d" strokeWidth="1.500" />
      <circle cx="112" cy="476.500" r="5.500" fill="#ea3a1d" />
      <path d="M111,475L122,481L117,481L114,485Z" fill="#20101c" />
      <circle cx="156" cy="471" r="8" fill="#b891b8" opacity=".5" />
      <circle cx="156" cy="470" r="7.500" fill="#f3f2f3" />
      <path d="M153,466.500L160,470L153,473.500Z" fill="#a3aaa4" />
      <PieceLabel />

      <path d="M347.500,213V628" stroke="#8d8d8d" />
      <Piece id="linkA" d="M347,213.500C379,214 400,198 405,159L502,180.500C498,200 495,215 494,229C405,232 356,300 347,377Z" />
      <path d="M494,229L492.500,250.500H486" stroke="#333" />
      <Tag x={450} y={261} />

      <path d="M579,305V617M579,616.500H753" stroke="#8d8d8d" />
      <Piece id="linkB" d="M579,365C588,298 640,218 726,218C725,262 725,304 742,324C694,361 651,409 628,467C608,513 602,566 604,617H579Z" />
      <path d="M733.500,169C729,190 727,205 726,218M742,324C748,329 752,331 759,331M719,239.500H726" stroke="#333" />
      <Tag x={688} y={412} />

      <Piece id="linkC" d="M923,325C928,330 933,332 940,332.500L933.500,618.500H785C783,567 789,514 809,468C832,410 875,362 923,325Z" />
      <path d="M760,618.500H933M900,241H906C906,282 909,309 923,325" stroke="#333" />
      <Tag x={888} y={465} />
    </g>
  </Drawing>
);

/* ---------- side panel parts ---------- */
const Lock = () => (
  <SmallGlyph viewBox="0 0 9 8" aria-hidden="true"><path d="M0,4H5V8H0Z" fill="#a9aab2" stroke="none" /><path d="M4,4V2C4,0 8,0 8,2V4" /></SmallGlyph>
);
const Section = ({ name, current }) => (
  <SectionButton $current={current}>
    <Lock />
    <SectionName>{name}</SectionName>
    <SmallGlyph viewBox="0 0 9 8" aria-hidden="true"><path d="M8,4.500H2M4,2L2,4.500L4,7" /></SmallGlyph>
  </SectionButton>
);
const rowGlyphs = [
  <><path d="M0,4L2,6M2,4L0,6M4,5H9" stroke="#999" /><path d="M11,0V10" strokeWidth="1.500" /></>,
  <><path d="M5,0L7,2M7,0L5,2M6,3V8M4,8H8" stroke="#888" /><path d="M1,10H11" strokeWidth="1.500" /></>,
  <><circle cx="6" cy="5.500" r="5" stroke="#999" strokeDasharray="6 2" /><path d="M1,5L5,1" strokeWidth="2" /><path d="M5,4L7,6M7,4L5,6" stroke="#999" /></>,
  <><circle cx="6" cy="5.500" r="5" stroke="#999" strokeDasharray="6 2" /><path d="M7,10L11,6" strokeWidth="2" /><path d="M5,4L7,6M7,4L5,6" stroke="#999" /></>,
  <><path d="M0,4L2,6M2,4L0,6" stroke="#999" /><path d="M10,0L5,5L10,10M5,5H11" strokeWidth="1.500" /></>,
  <><path d="M1,3H7V10" strokeWidth="1.500" /><path d="M9,0L11,2M11,0L9,2M2,5H5V8H2Z" stroke="#999" /></>,
];
const RowGlyph = styled.svg`
  flex: none;
  width: 12px;
  height: 11px;
  fill: none;
  stroke: #333;
  stroke-width: 1;
`;
const coords = [
  ["Dx", "(cm)", "-", "-"],
  ["Dy", "(cm)", "-", "-"],
  ["Distância 1", "(cm)", "0.00", "0.00"],
  ["Distância 2", "(cm)", "", ""],
  ["Ângulo absoluto", "(°)", "", ""],
  ["", "", "", ""],
];
const noteItems = [
  "1° SELECIONE A ABA\nDESENHO",
  "2° FERRAMENTA CURVAS\nLIVRES",
  "3° TRACE OS RECORTES",
  "4° ABA MOLDE",
  "5° FERRAMENTA CRIAR UMA\nPEÇA VINCULADA",
  "6° FERRAMENTA QUEBRAR\nLINK DE CONEXÃO",
  "COMO ESSE RECURSO É\nPOSSÍVEL FAZER VÁRIOS\nAJUSTES AO SEU RECORTE\nAO MESMO TEMPO POUPANDO\nTEMPO E RETRABALHO",
];
const menus = ["Projeto", "Editar", "molde", "Forma", "Desenhar", "Vestuário", "Graduação", "Medida", "Sob medida", "Definições", "Ver", "Ajuda"];
const paletteTools = ["pointer", "editCurve", "pencil", "pin", "grading", "tape", "snap"];

export default function App() {
  return (
    <Page>
      <Global />
      <TitleBar>
        <MenuBar>
          <AppMark viewBox="0 0 15 15" aria-hidden="true">
            <path d="M4,0H13L15,2V11L11,15H2L0,13V4Z" fill="#eda128" />
            <path d="M5,9V6h2v2h-2M9,6h1l1,1v1l-1,1h-1z" fill="none" stroke="#f8d08a" />
          </AppMark>
          {menus.map((m) => <MenuItem key={m}>{m}</MenuItem>)}
        </MenuBar>
        <FileName>T-shirt_ArtElements-.gemx</FileName>
        <WindowSide>
          <User>
            <svg width="9" height="9" viewBox="0 0 9 9" aria-hidden="true">
              <circle cx="4.500" cy="4.500" r="4" fill="#fff" stroke="#4b6272" />
              <circle cx="4.500" cy="3.500" r="1.500" fill="#35566d" />
              <path d="M2,7.500C2,5 7,5 7,7.500Z" fill="#35566d" />
            </svg>
            Maicon Souza
          </User>
          <WindowButton aria-label="Minimizar"><svg width="8" height="8"><path d="M1,4.500H7" stroke="#222" strokeWidth="1.500" /></svg></WindowButton>
          <WindowButton aria-label="Maximizar"><svg width="8" height="8"><path d="M1.500,1.500H6.500V6.500H1.500Z" fill="none" stroke="#222" strokeWidth="1.500" /></svg></WindowButton>
          <WindowButton aria-label="Fechar"><svg width="8" height="8"><path d="M1,1L7,7M7,1L1,7" stroke="#222" strokeWidth="1.500" /></svg></WindowButton>
        </WindowSide>
      </TitleBar>

      <Main>
        <Work>
          <Toolbar><Tools list={mainTools} /></Toolbar>
          <Toolbar>
            <Tools list={curveStart} />
            <AngleInput aria-label="Ângulo" defaultValue="180.00" />
            <Tools list={curveRest} />
          </Toolbar>
          <CanvasRow>
            <Pieces />
            <VScroll>
              <Arrow $side="bottom" $flat="top" />
              <VThumb />
              <Arrow $side="top" $flat="bottom" />
            </VScroll>
            <Palette>
              {paletteTools.map((t) => (
                <PaletteButton key={t} $active={t === "editCurve"} aria-label={t}><Icon name={t} /></PaletteButton>
              ))}
            </Palette>
          </CanvasRow>
          <HScroll>
            <Arrow $side="right" $flat="left" />
            <HTrack><HThumb /></HTrack>
            <Arrow $side="left" $flat="right" />
          </HScroll>
          <StatusBar><StatusCell /><StatusCell /></StatusBar>
        </Work>

        <Side>
          <Splitter><Dot /><Dot /><Dot /><Dot /><Dot /></Splitter>
          <SideBody>
            <Sections>
              <Section name="ETAPAS DA FUNÇÃO" />
              <Section name="MEDIDAS" />
              <Section name="TAMANHO BASE" />
              <Section name="BESPOKE" />
              <Section name="TABELA GRADUAÇÃO" />
              <Section name="COORDENADAS" current />
            </Sections>
            <TableFrame>
              <CoordTable>
                <colgroup><col width="160" /><col width="37" /><col /></colgroup>
                <thead>
                  <HeadRow>
                    <th>Manual</th>
                    <th><Mark $tone="#e08a7c" /></th>
                    <th><Mark $tone="#79b3d4" /></th>
                  </HeadRow>
                </thead>
                <tbody>
                  {coords.map(([name, unit, a, b], i) => (
                    <CoordRow key={i} $shade={i % 2 === 0}>
                      <td><Label><RowGlyph viewBox="0 0 12 11" aria-hidden="true">{rowGlyphs[i]}</RowGlyph>{name} <Unit>{unit}</Unit></Label></td>
                      <td>{a}</td>
                      <td>{b}</td>
                    </CoordRow>
                  ))}
                </tbody>
              </CoordTable>
              <Swatches><Swatch $grow={60} $tone="#74d3de" /><Swatch $grow={103} $tone="#fda0f3" /></Swatches>
            </TableFrame>
            <Sections><Section name="INFO" current /></Sections>
            <Props>
              <Legend>Prop</Legend>
              <PropList><PropItem>Nom</PropItem><PropItem>Tipo</PropItem><PropItem>Tipo</PropItem></PropList>
              <PropList><PropItem>Mov</PropItem><PropItem>Mov</PropItem><PropItem $faint>Con</PropItem><PropItem $faint>Âng</PropItem></PropList>
              <PropButton>De</PropButton>
            </Props>
            <PointsHead>ÁREA DE PONTOS
              <svg width="6" height="6" aria-hidden="true"><path d="M1,2.500H6" stroke="#444" /></svg>
            </PointsHead>
            <PointsBody>
              <Logo><LogoTop>MAB</LogoTop><LogoBottom>FORTUNA</LogoBottom></Logo>
            </PointsBody>
            <PointsFoot>
              <svg width="80" height="6" aria-hidden="true"><circle cx="56" cy="2" r="2" fill="none" stroke="#9fcbb0" /></svg>
            </PointsFoot>
          </SideBody>
        </Side>
      </Main>

      <Note>
        {noteItems.map((t) => <NoteItem key={t}>{t}</NoteItem>)}
        <NoteTag />
      </Note>
    </Page>
  );
}
